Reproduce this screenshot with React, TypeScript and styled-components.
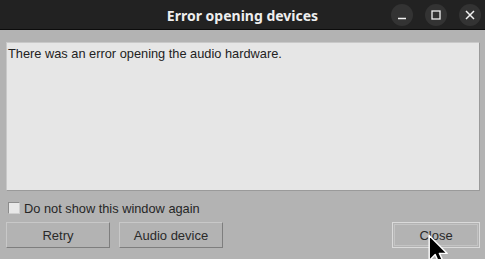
import React from "react";
import styled, { createGlobalStyle } from "styled-components";

const Global = createGlobalStyle`
  html, body { margin: 0; padding: 0; width: 485px; height: 259px; overflow: hidden; background: #b3b3b3; }
  #root { width: 485px; height: 259px; }
`;

const Window = styled.div`
  position: relative;
  width: 485px;
  height: 259px;
  display: flex;
  flex-direction: column;
  background: #b3b3b3;
  font-family: "Liberation Sans", Arial, sans-serif;
  overflow: hidden;
`;

const TitleBar = styled.div`
  height: 29px;
  flex: none;
  background: #222222;
  border-bottom: 1px solid #0c0c0c;
  display: grid;
  grid-template-columns: 1fr auto 1fr;
  align-items: center;
`;

const Title = styled.div`
  grid-column: 2;
  font-family: "Noto Sans", "Open Sans", sans-serif;
  font-weight: 700;
  font-size: 14px;
  color: #eeeeee;
  padding-top: 1px;
`;

const Controls = styled.div`
  grid-column: 3;
  justify-self: end;
  display: flex;
  gap: 12px;
  padding-right: 4px;
`;

const CtlButton = styled.div`
  width: 22px;
  height: 22px;
  border-radius: 50%;
  background: #333333;
  display: flex;
  align-items: center;
  justify-content: center;
  color: #f2f2f2;
`;

const Body = styled.div`
  flex: 1;
  display: flex;
  flex-direction: column;
  padding: 12px 5px 10px 6px;
`;

const MessageBox = styled.div`
  height: 149px;
  box-sizing: border-box;
  background: #e6e6e6;
  border-top: 1px solid #c9c9c9;
  border-left: 1px solid #c9c9c9;
  border-right: 1px solid #9a9a9a;
  border-bottom: 1px solid #9a9a9a;
  padding: 3px 1px;
  font-size: 12.8px;
  color: #222222;
`;

const CheckRow = styled.label`
  display: flex;
  align-items: center;
  gap: 4px;
  margin-top: 10px;
  margin-left: 2px;
  font-size: 12.8px;
  color: #262626;
  height: 14px;
`;

const Box = styled.span`
  width: 10px;
  height: 10px;
  background: #e8e8e8;
  border-top: 1px solid #8c8c8c;
  border-left: 1px solid #8c8c8c;
  border-right: 1px solid #d0d0d0;
  border-bottom: 1px solid #d0d0d0;
`;

const ButtonRow = styled.div`
  display: flex;
  margin-top: 7px;
  gap: 9px;
`;

const Button = styled.div<{ $w: number; $focused?: boolean }>`
  width: ${(p) => p.$w}px;
  height: 26px;
  box-sizing: border-box;
  display: flex;
  align-items: center;
  justify-content: center;
  font-size: 13px;
  color: #2a2a2a;
  background: #b3b3b3;
  border-top: 1px solid ${(p) => (p.$focused ? "#dadada" : "#c8c8c8")};
  border-left: 1px solid ${(p) => (p.$focused ? "#dadada" : "#c8c8c8")};
  border-right: 1px solid ${(p) => (p.$focused ? "#dadada" : "#7e7e7e")};
  border-bottom: 1px solid ${(p) => (p.$focused ? "#dadada" : "#7e7e7e")};
  ${(p) => (p.$focused ? "outline: 1px solid #c4c4c4; outline-offset: -3px;" : "")}
`;

const Spacer = styled.div`
  flex: 1;
`;

const Cursor = styled.svg`
  position: absolute;
  left: 428px;
  top: 234px;
`;

export default function App() {
  return (
    <Window>
      <Global />
      <TitleBar>
        <Title>Error opening devices</Title>
        <Controls>
          <CtlButton>
            <svg width="10" height="10" viewBox="0 0 10 10">
              <line x1="1" y1="8.5" x2="9" y2="8.5" stroke="currentColor" strokeWidth="1.5" />
            </svg>
          </CtlButton>
          <CtlButton>
            <svg width="10" height="10" viewBox="0 0 10 10">
              <rect x="1" y="1" width="8" height="8" fill="none" stroke="currentColor" strokeWidth="1.3" />
            </svg>
          </CtlButton>
          <CtlButton>
            <svg width="10" height="10" viewBox="0 0 10 10">
              <path d="M1 1 L9 9 M9 1 L1 9" stroke="currentColor" strokeWidth="1.5" />
            </svg>
          </CtlButton>
        </Controls>
      </TitleBar>
      <Body>
        <MessageBox>There was an error opening the audio hardware.</MessageBox>
        <CheckRow>
          <Box />
          Do not show this window again
        </CheckRow>
        <ButtonRow>
          <Button $w={104}>Retry</Button>
          <Button $w={104}>Audio device</Button>
          <Spacer />
          <Button $w={88} $focused>Close</Button>
        </ButtonRow>
      </Body>
      <Cursor width="24" height="34" viewBox="0 0 20 28">
        <path
          d="M1 1 L1 22 L6 17 L10 26 L13.5 24.5 L9.5 16 L16 16 Z"
          fill="#000"
          stroke="#fff"
          strokeWidth="1.2"
          strokeLinejoin="round"
        />
      </Cursor>
    </Window>
  );
}
